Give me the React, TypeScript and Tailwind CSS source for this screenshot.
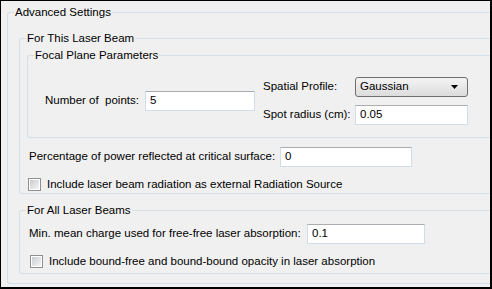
import React from "react";

const font = { fontFamily: '"Liberation Sans", Arial, sans-serif' };

function Group({
  title,
  className,
  children,
}: {
  title: string;
  className?: string;
  children: React.ReactNode;
}) {
  return (
    <fieldset
      className={`border border-r-0 border-[#d5dfe5] rounded-l-[3px] ${className ?? ""}`}
    >
      <legend className="ml-[6px] px-[1px] leading-[14px] text-black">{title}</legend>
      {children}
    </fieldset>
  );
}

function TextBox({ value, width }: { value: string; width: string }) {
  return (
    <div
      className={`${width} h-[20px] bg-white border border-[#d3dde8] border-t-[#abadb3] pl-[4px] flex items-center leading-none`}
    >
      {value}
    </div>
  );
}

function CheckBox({ label }: { label: string }) {
  return (
    <label className="flex items-center gap-[6px] leading-[14px]">
      <span className="w-[13px] h-[13px] border border-[#8e8f8f] bg-white flex items-center justify-center">
        <span className="w-[9px] h-[9px] bg-gradient-to-br from-[#c9ccd1] to-[#f4f4f4]" />
      </span>
      {label}
    </label>
  );
}

export default function App() {
  return (
    <div
      style={font}
      className="w-[492px] h-[289px] bg-[#f0f0f0] border-black border-t border-l border-r-2 border-b-2 overflow-hidden text-[11.5px] text-black pl-[6px] pt-[4px]"
    >
      <Group title="Advanced Settings" className="h-[279px]">
        <div className="pl-[11px] pt-[12px] flex flex-col">
          <Group title="For This Laser Beam">
            <div className="pl-[7px] pt-[3px]">
              <Group title="Focal Plane Parameters">
                <div className="flex items-center pl-[17px] pt-[15px] pb-[12px]">
                  <span className="w-[100px]">Number of&nbsp; points:</span>
                  <TextBox value="5" width="w-[110px]" />
                  <div className="ml-[8px] flex flex-col gap-[8px]">
                    <div className="flex items-center">
                      <span className="w-[92px]">Spatial Profile:</span>
                      <div className="w-[113px] h-[20px] rounded-[3px] border border-[#707070] bg-gradient-to-b from-[#f4f4f4] to-[#dcdcdc] flex items-center justify-between pl-[4px] pr-[9px]">
                        <span>Gaussian</span>
                        <svg width="7" height="4" viewBox="0 0 7 4">
                          <path d="M0 0h7L3.5 4z" fill="#000" />
                        </svg>
                      </div>
                    </div>
                    <div className="flex items-center">
                      <span className="w-[92px]">Spot radius (cm):</span>
                      <TextBox value="0.05" width="w-[113px]" />
                    </div>
                  </div>
                </div>
              </Group>
            </div>
            <div className="pl-[9px] pt-[9px] flex items-center">
              <span className="w-[251px]">Percentage of power reflected at critical surface:</span>
              <TextBox value="0" width="w-[132px]" />
            </div>
            <div className="pl-[8px] pt-[10px] pb-[2px]">
              <CheckBox label="Include laser beam radiation as external Radiation Source" />
            </div>
          </Group>
          <Group title="For All Laser Beams" className="mt-[9px]">
            <div className="pl-[9px] pt-[7px] flex items-center">
              <span className="w-[278px]">Min. mean charge used for free-free laser absorption:</span>
              <TextBox value="0.1" width="w-[118px]" />
            </div>
            <div className="pl-[10px] pt-[10px] pb-[5px]">
              <CheckBox label="Include bound-free and bound-bound opacity in laser absorption" />
            </div>
          </Group>
        </div>
      </Group>
    </div>
  );
}
